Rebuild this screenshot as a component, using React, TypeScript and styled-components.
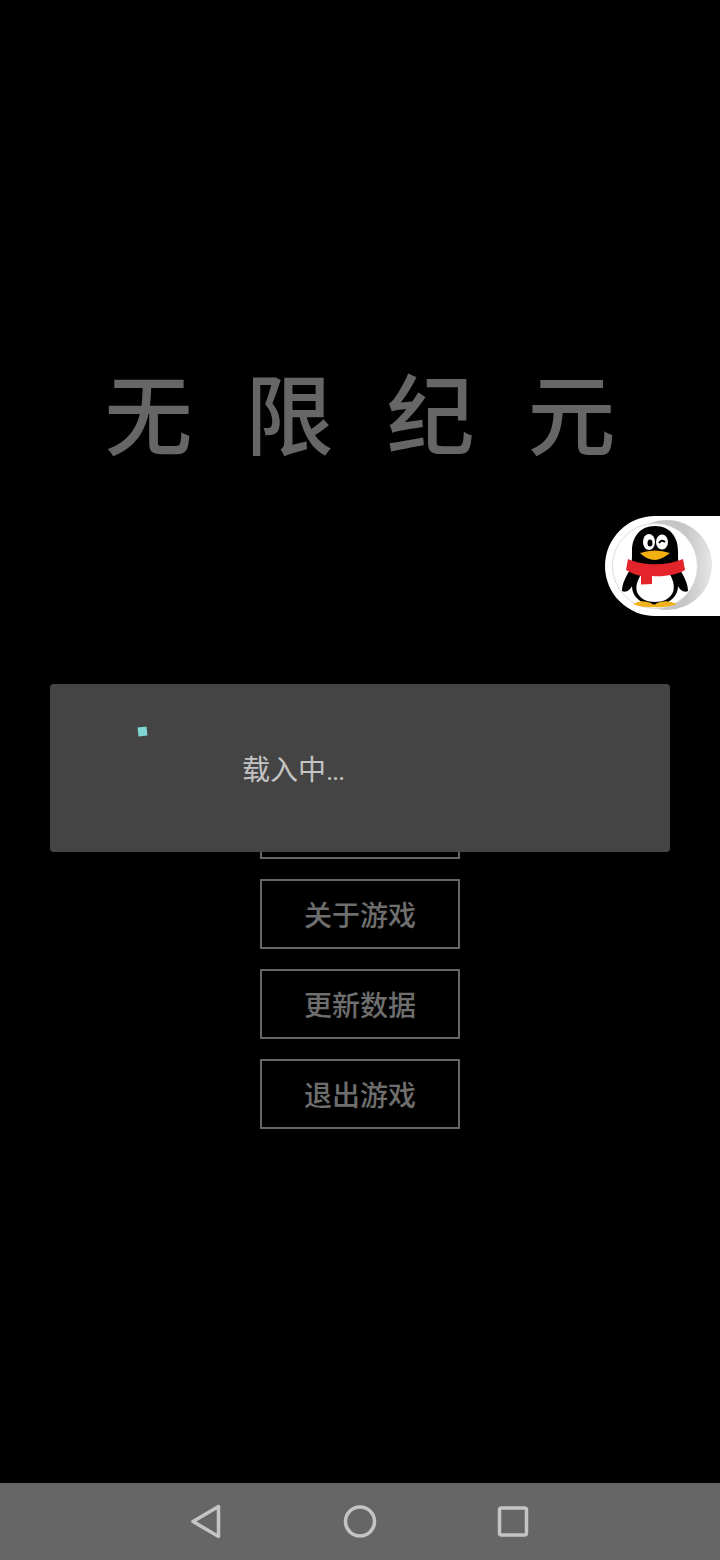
import { createGlobalStyle, styled } from "styled-components";

const GlobalStyle = createGlobalStyle`
  html, body {
    margin: 0;
    padding: 0;
    background: #000;
  }
  body {
    font-family: Roboto, "Noto Sans CJK SC", sans-serif;
  }
`;

const Screen = styled.div`
  position: relative;
  width: 720px;
  height: 1560px;
  overflow: hidden;
  background: #000;
  display: flex;
  flex-direction: column;
`;

const Main = styled.main`
  flex: 1;
  display: flex;
  flex-direction: column;
  align-items: center;
  padding-top: 368px;
`;

const Title = styled.h1`
  margin: 0;
  height: 100px;
  padding-left: 53px;
  font-size: 88px;
  line-height: 100px;
  font-weight: 500;
  letter-spacing: 53px;
  white-space: nowrap;
  color: #666;
`;

const Menu = styled.div`
  margin-top: 231px;
  display: flex;
  flex-direction: column;
  gap: 20px;
`;

const MenuButton = styled.div`
  box-sizing: border-box;
  width: 200px;
  height: 70px;
  border: 2px solid #666;
  display: flex;
  align-items: center;
  justify-content: center;
  font-size: 28px;
  font-weight: 500;
  color: #6e6e6e;
`;

const Dialog = styled.div`
  position: absolute;
  left: 50px;
  top: 684px;
  width: 620px;
  height: 168px;
  border-radius: 4px;
  background: #444;
  display: flex;
`;

const SpinnerDot = styled.div`
  width: 9px;
  height: 9px;
  margin: 43px 0 0 88px;
  background: #7fd6d2;
  transform: rotate(-6deg);
`;

const Message = styled.div`
  margin-left: 95px;
  align-self: center;
  font-size: 28px;
  color: #c4c4c4;
`;

const Dots = styled.span`
  letter-spacing: -1.4px;
`;

const QQBadge = styled.svg`
  position: absolute;
  left: 605px;
  top: 516px;
  display: block;
`;

const NavBar = styled.nav`
  height: 77px;
  background: #666;
  display: flex;
  align-items: center;
  justify-content: center;
  gap: 105px;
`;

const NavIcon = styled.svg`
  display: block;
  fill: none;
  stroke: #c4c4c4;
  stroke-width: 3.5;
  stroke-linejoin: round;
`;

export default function App() {
  return (
    <Screen>
      <GlobalStyle />
      <Main>
        <Title>无限纪元</Title>
        <Menu>
          <MenuButton>开始游戏</MenuButton>
          <MenuButton>游戏设置</MenuButton>
          <MenuButton>关于游戏</MenuButton>
          <MenuButton>更新数据</MenuButton>
          <MenuButton>退出游戏</MenuButton>
        </Menu>
      </Main>
      <NavBar>
        <NavIcon width="48" height="48" viewBox="0 0 48 48">
          <path d="M35.5 8.5 V38.5 L10 23.5 Z" />
        </NavIcon>
        <NavIcon width="48" height="48" viewBox="0 0 48 48">
          <circle cx="24" cy="23.5" r="14.5" />
        </NavIcon>
        <NavIcon width="48" height="48" viewBox="0 0 48 48">
          <rect x="10.5" y="10" width="27" height="27" rx="2" />
        </NavIcon>
      </NavBar>
      <Dialog>
        <SpinnerDot />
        <Message>
          载入中<Dots>...</Dots>
        </Message>
      </Dialog>
      <QQBadge width="115" height="100" viewBox="0 0 115 100">
        <defs>
          <linearGradient id="crescent" x1="0" x2="1" y1="0" y2="0">
            <stop offset="0.7" stopColor="#c6c6c6" />
            <stop offset="1" stopColor="#e6e6e6" />
          </linearGradient>
        </defs>
        <path d="M50 0 H115 V100 H50 A50 50 0 0 1 50 0 Z" fill="#fff" />
        <circle cx="62" cy="49" r="45" fill="url(#crescent)" />
        <circle cx="50" cy="50" r="42.5" fill="#fff" stroke="#dcdcdc" />
        <path
          d="M50 10 C34 10 27 22 27 35 C27 43 27 49 25 54 C21 60 17 68 17 75 C21 77 25 74 27 70 C27 82 38 89 50 89 C62 89 73 82 73 70 C75 74 79 77 83 75 C83 68 79 60 75 54 C73 49 73 43 73 35 C73 22 66 10 50 10 Z"
          fill="#000"
        />
        <path d="M38 56 H63 C68 62 70 70 68 76 C65 83 58 86 50 86 C42 86 35 83 32 76 C30 70 33 62 38 56 Z" fill="#fff" />
        <path
          d="M23 43 C38 50 62 50 78 43 L80 54 C72 59 58 61 47 60 V68 L36 68.5 V60 C31 59 26 57 21 54 Z"
          fill="#e3242b"
        />
        <ellipse cx="44" cy="26" rx="6" ry="8" fill="#fff" />
        <ellipse cx="57" cy="26" rx="6" ry="7.5" fill="#fff" />
        <ellipse cx="45" cy="27" rx="2.5" ry="3.5" fill="#000" />
        <path d="M54 27 Q57 23 60 26" fill="none" stroke="#000" strokeWidth="2" />
        <path d="M35 37 Q50 32 65 37 Q56 44 50 44 Q42 44 35 37 Z" fill="#f4b010" />
        <path d="M28 88 Q36 83 46 87 Q49 90 52 87 Q62 83 72 88 Q60 92 50 91 Q38 92 28 88 Z" fill="#f2b21c" />
      </QQBadge>
    </Screen>
  );
}
